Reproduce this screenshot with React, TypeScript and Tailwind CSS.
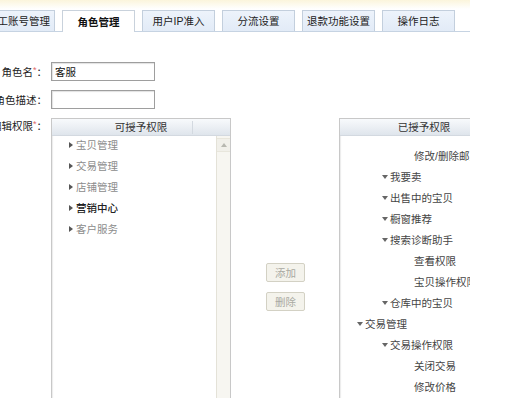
import React from 'react';

const tabs = ['员工账号管理', '角色管理', '用户IP准入', '分流设置', '退款功能设置', '操作日志'];

const available = [
  { label: '宝贝管理', strong: false },
  { label: '交易管理', strong: false },
  { label: '店铺管理', strong: false },
  { label: '营销中心', strong: true },
  { label: '客户服务', strong: false },
];

// level: 0..2, arrow: open node (▾), leaf rows have none
const granted: { label: string; level: number; arrow: boolean }[] = [
  { label: '删除运费模板', level: 2, arrow: false },
  { label: '修改/删除邮费模板', level: 2, arrow: false },
  { label: '我要卖', level: 1, arrow: true },
  { label: '出售中的宝贝', level: 1, arrow: true },
  { label: '橱窗推荐', level: 1, arrow: true },
  { label: '搜索诊断助手', level: 1, arrow: true },
  { label: '查看权限', level: 2, arrow: false },
  { label: '宝贝操作权限', level: 2, arrow: false },
  { label: '仓库中的宝贝', level: 1, arrow: true },
  { label: '交易管理', level: 0, arrow: true },
  { label: '交易操作权限', level: 1, arrow: true },
  { label: '关闭交易', level: 2, arrow: false },
  { label: '修改价格', level: 2, arrow: false },
];

const indent = ['pl-[17px]', 'pl-[42px]', 'pl-[67px]'];

const RightArrow = () => (
  <span className="inline-block w-0 h-0 border-y-[3px] border-y-transparent border-l-[4px] border-l-[#555] mr-[3px]" />
);

const DownArrow = () => (
  <span className="inline-block w-0 h-0 border-x-[3px] border-x-transparent border-t-[4px] border-t-[#666] mr-[2px]" />
);

const Label = ({ text, required }: { text: string; required?: boolean }) => (
  <div className="w-[47px] shrink-0 flex justify-end whitespace-nowrap text-[#222]">
    <span>{text}</span>
    {required && <span className="text-[#e06a6a] text-[9px] leading-[10px]">*</span>}
    <span>：</span>
  </div>
);

const PanelHeader = ({ title }: { title: string }) => (
  <div className="relative z-10 h-[17px] flex items-center justify-center border-b border-[#d3d9e0] bg-gradient-to-b from-[#f8fafc] to-[#dfe5ec] text-[#333]">
    {title}
  </div>
);

export default function App() {
  return (
    <div
      className="w-[507px] h-[398px] overflow-hidden bg-white text-[10.5px] leading-[14px]"
      style={{ fontFamily: '"Liberation Sans", "Noto Sans CJK SC", sans-serif' }}
    >
      <div className="w-[470px] h-full overflow-hidden flex flex-col">
        <div className="h-[9px] shrink-0 bg-gradient-to-b from-[#fbf5dc] to-white" />

        {/* tabs */}
        <div className="mt-[1px] h-[22px] shrink-0 flex items-end gap-[7px] border-b border-[#c6d3e2]">
          {tabs.map((t, i) => (
            <div
              key={t}
              className={`w-[73px] shrink-0 flex items-center justify-center whitespace-nowrap border border-b-0 ${
                i === 0 ? '-ml-[18px]' : ''
              } ${
                i === 1
                  ? 'bg-white border-[#c9d2dc] font-bold text-[#111] h-[22px] -mb-[1px]'
                  : 'h-[21px] bg-gradient-to-b from-[#edf3fb] to-[#e2ebf7] border-[#c3cfdd] text-[#222]'
              }`}
            >
              {t}
            </div>
          ))}
        </div>

        {/* form */}
        <div className="mt-[30px] flex flex-col gap-[9px]">
          <div className="flex items-center gap-[4px]">
            <Label text="角色名" required />
            <div className="w-[104px] h-[19px] border border-[#9e9e9e] shadow-[inset_1px_1px_1px_rgba(0,0,0,0.12)] flex items-center px-[3px] text-[#111]">
              客服
            </div>
          </div>
          <div className="flex items-center gap-[4px]">
            <Label text="角色描述" />
            <div className="w-[104px] h-[19px] border border-[#9e9e9e] shadow-[inset_1px_1px_1px_rgba(0,0,0,0.12)]" />
          </div>
          <div className="flex items-start gap-[4px]">
            <div className="pt-[1px]">
              <Label text="编辑权限" required />
            </div>

            {/* available list */}
            <div className="w-[180px] h-[290px] shrink-0 border border-[#c8c8c8] shadow-[inset_1px_0_1px_rgba(0,0,0,0.08)] flex flex-col">
              <div className="relative">
                <PanelHeader title="可授予权限" />
                <span className="absolute z-10 left-[140px] top-[2px] bottom-[2px] w-px bg-[#d3d9e0]" />
              </div>
              <div className="flex-1 flex">
                <div className="flex-1 flex flex-col -mt-[2px]">
                  {available.map((a) => (
                    <div
                      key={a.label}
                      className={`h-[21px] flex items-center pl-[17px] ${
                        a.strong ? 'text-[#222] font-medium' : 'text-[#8c8c8c]'
                      }`}
                    >
                      <RightArrow />
                      <span>{a.label}</span>
                    </div>
                  ))}
                </div>
                <div className="w-[14px] border-l border-[#e4e2d8] bg-[#f7f6f1] flex flex-col">
                  <div className="mt-[2px] h-[14px] flex items-center justify-center border-y border-[#e8e6dc] bg-[#f1f0ea]">
                    <span className="w-0 h-0 border-x-[3px] border-x-transparent border-b-[4px] border-b-[#b8b8b0]" />
                  </div>
                </div>
              </div>
            </div>

            {/* buttons */}
            <div className="ml-[31px] mt-[145px] flex flex-col gap-[10px]">
              {['添加', '删除'].map((b) => (
                <div
                  key={b}
                  className="w-[39px] h-[19px] flex items-center justify-center border border-[#d3d1c4] rounded-[2px] bg-[#f4f3ec] text-[#a9a9a2]"
                >
                  {b}
                </div>
              ))}
            </div>

            {/* granted list */}
            <div className="ml-[30px] w-[170px] h-[290px] shrink-0 border border-[#c8c8c8] shadow-[inset_1px_0_1px_rgba(0,0,0,0.08)] flex flex-col">
              <PanelHeader title="已授予权限" />
              <div className="flex-1 overflow-hidden">
                <div className="-mt-[12px] flex flex-col">
                  {granted.map((g, i) => (
                    <div
                      key={i}
                      className={`h-[21px] flex whitespace-nowrap text-[#444] ${indent[g.level]} ${
                        i === 0 ? 'items-start' : 'items-center'
                      }`}
                    >
                      {g.arrow ? <DownArrow /> : <span className="w-[7px] shrink-0" />}
                      <span>{g.label}</span>
                    </div>
                  ))}
                </div>
              </div>
            </div>
          </div>
        </div>
      </div>
    </div>
  );
}
